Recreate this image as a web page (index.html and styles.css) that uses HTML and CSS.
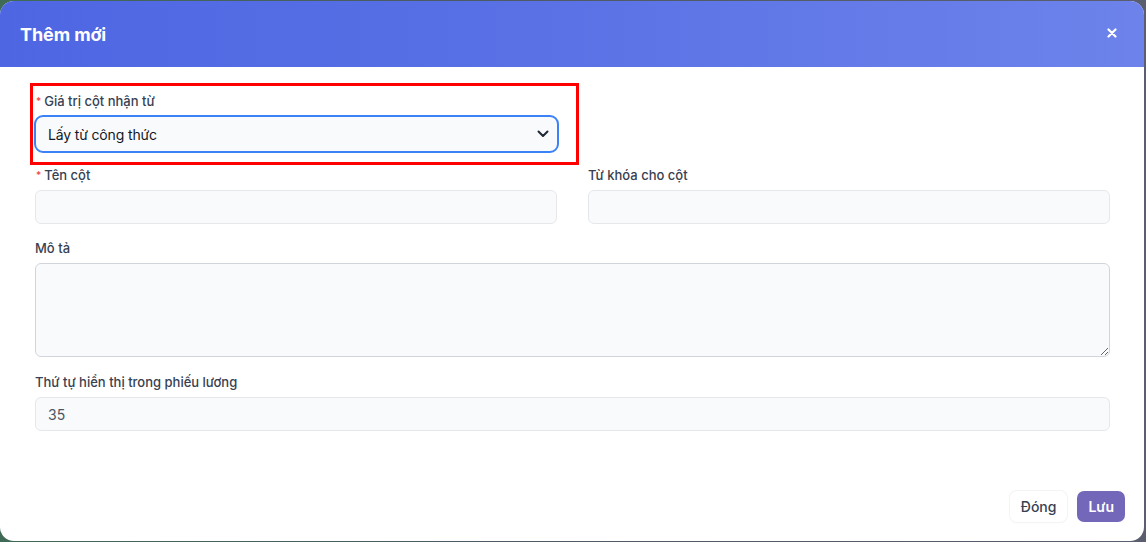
FILE: index.html
```html
<!DOCTYPE html>
<html lang="vi">
<head>
<meta charset="utf-8">
<title>Thêm mới</title>
<link rel="stylesheet" href="styles.css">
</head>
<body>
<div class="modal">
  <div class="modal-header">
    <h2 class="modal-title">Thêm mới</h2>
    <button class="close-btn" aria-label="Đóng">
      <svg width="10" height="10" viewBox="0 0 10 10"><path d="M1.5 1.5 L8.5 8.5 M8.5 1.5 L1.5 8.5" stroke="#fff" stroke-width="2.2" stroke-linecap="round"/></svg>
    </button>
  </div>
  <div class="modal-body">
    <div class="grid">
      <div class="field">
        <label class="label"><span class="req">*</span>Giá trị cột nhận từ</label>
        <div class="select">
          <span>Lấy từ công thức</span>
          <svg width="12" height="8" viewBox="0 0 12 8"><path d="M1.5 1.5 L6 6 L10.5 1.5" fill="none" stroke="#1f2937" stroke-width="2" stroke-linecap="round" stroke-linejoin="round"/></svg>
        </div>
      </div>
      <div></div>
      <div class="field">
        <label class="label"><span class="req">*</span>Tên cột</label>
        <div class="input"></div>
      </div>
      <div class="field">
        <label class="label">Từ khóa cho cột</label>
        <div class="input"></div>
      </div>
      <div class="field span2 spaced">
        <label class="label">Mô tả</label>
        <textarea class="textarea"></textarea>
      </div>
      <div class="field span2 spaced-more">
        <label class="label">Thứ tự hiển thị trong phiếu lương</label>
        <div class="input">35</div>
      </div>
    </div>
  </div>
  <div class="modal-footer">
    <button class="btn btn-light">Đóng</button>
    <button class="btn btn-primary">Lưu</button>
  </div>
  <div class="highlight"></div>
</div>
</body>
</html>
```
FILE: styles.css
```css
* { box-sizing: border-box; }
html, body { height: 100%; }
body {
  margin: 0;
  background: linear-gradient(90deg, #3f6a55 0%, #4c5a64 40%, #5b5e6e 100%);
  font-family: Inter, "Noto Sans", "Liberation Sans", sans-serif;
  overflow: hidden;
}
.modal {
  position: relative;
  width: 1144px;
  height: 540px;
  margin-top: 1px;
  background: #fff;
  border-radius: 14px;
  overflow: hidden;
  display: flex;
  flex-direction: column;
}
.modal-header {
  height: 66px;
  flex: none;
  padding: 0 26px 0 20px;
  display: flex;
  align-items: center;
  justify-content: space-between;
  background: linear-gradient(90deg, #4e66e2 0%, #5a72e5 50%, #6d83eb 100%);
}
.modal-title {
  margin: 0;
  color: #fff;
  font-size: 18px;
  font-weight: 700;
  letter-spacing: -0.1px;
}
.close-btn {
  border: 0;
  background: none;
  padding: 0;
  width: 12px;
  height: 12px;
  display: flex;
  align-items: center;
  justify-content: center;
  margin-top: -2px;
}
.modal-body {
  padding: 24px 34px 0 35px;
}
.grid {
  display: grid;
  grid-template-columns: 1fr 1fr;
  column-gap: 31px;
  row-gap: 12px;
}
.span2 { grid-column: 1 / span 2; }
.spaced { margin-top: 2px; }
.spaced-more { margin-top: 3px; }
.field { display: flex; flex-direction: column; }
.label {
  font-size: 13px;
  line-height: 20px;
  font-weight: 500;
  color: #374151;
  margin-bottom: 5px;
}
.req {
  color: #ef4444;
  font-size: 10px;
  margin-right: 3px;
  margin-left: 1px;
  vertical-align: 1px;
}
.select {
  height: 38px;
  margin-top: -1px;
  margin-left: -1px;
  margin-right: -2px;
  border: 2px solid #3b82f6;
  border-radius: 9px;
  background: #f9fafb;
  display: flex;
  align-items: center;
  justify-content: space-between;
  padding: 0 8px 0 12px;
  font-size: 14px;
  letter-spacing: -0.15px;
  color: #111827;
}
.input {
  height: 34px;
  border: 1px solid #e5e7eb;
  border-radius: 6px;
  background: #f9fafb;
  padding: 0 12px;
  display: flex;
  align-items: center;
  font-size: 14px;
  color: #4b5563;
}
.textarea {
  height: 94px;
  border: 1px solid #d1d5db;
  border-radius: 6px;
  background: #f9fafb;
  resize: vertical;
  font-family: inherit;
  display: block;
  width: 100%;
}
.modal-footer {
  margin-top: auto;
  padding: 0 19px 19px;
  display: flex;
  justify-content: flex-end;
  gap: 10px;
}
.btn {
  height: 31px;
  border-radius: 7px;
  font-family: inherit;
  font-size: 14px;
  font-weight: 500;
  padding: 0 11px;
  border: 0;
}
.btn-light {
  background: #fff;
  color: #374151;
  box-shadow: 0 0 0 1px #f3f4f6, 0 1px 2px rgba(0,0,0,0.04);
}
.btn-primary {
  background: #7367ba;
  color: #fff;
  font-weight: 600;
}
.highlight {
  position: absolute;
  left: 30px;
  top: 82px;
  width: 549px;
  height: 82px;
  border: 3px solid #ff0000;
  pointer-events: none;
}
```
